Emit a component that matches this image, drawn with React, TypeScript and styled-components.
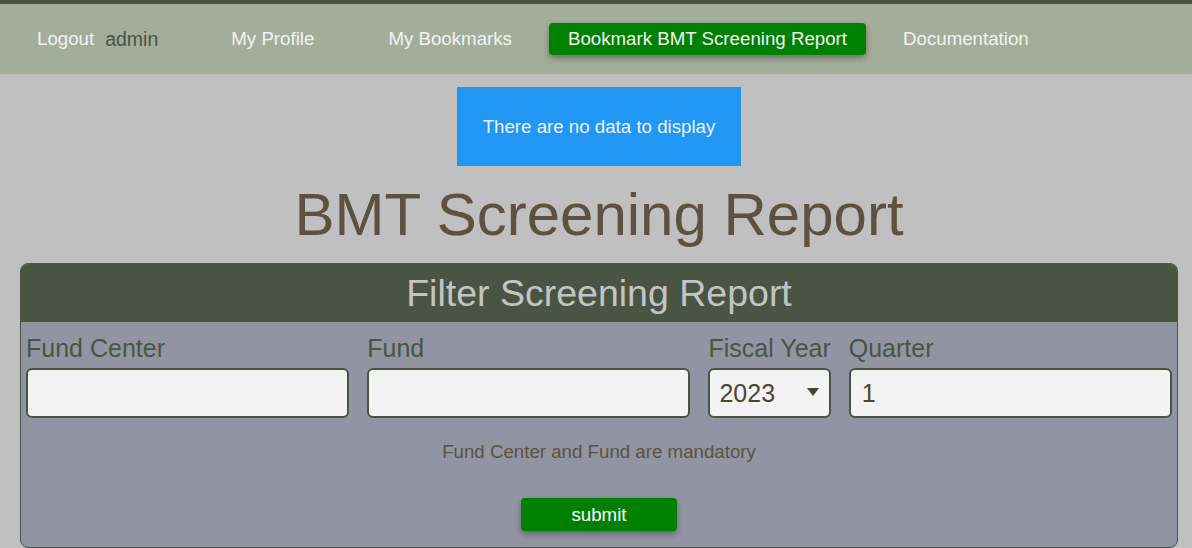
import React from "react";
import styled, { createGlobalStyle } from "styled-components";

const Global = createGlobalStyle`
  html, body { margin: 0; padding: 0; }
  body {
    background: #c0c0c0;
    font-family: "Liberation Sans", Arial, sans-serif;
    overflow: hidden;
  }
`;

const Page = styled.div`
  width: 1198px;
  display: flex;
  flex-direction: column;
  align-items: center;
`;

const Nav = styled.nav`
  align-self: stretch;
  height: 70px;
  border-top: 4px solid #4a5443;
  background: #a3ae9a;
  display: flex;
  align-items: center;
  padding-left: 18px;
`;

const NavItem = styled.a<{ $ml?: number; $active?: boolean }>`
  margin-left: ${(p) => p.$ml ?? 0}px;
  padding: 0 19px;
  height: 32px;
  display: flex;
  align-items: center;
  font-size: 18.7px;
  color: #f2f2f2;
  text-decoration: none;
  white-space: nowrap;
  border-radius: 4px;
  background: ${(p) => (p.$active ? "#008000" : "transparent")};
  box-shadow: ${(p) => (p.$active ? "0 3px 6px rgba(0,0,0,0.35)" : "none")};
`;

const User = styled.span`
  margin-left: 11px;
  color: #4a5443;
  font-size: 19.5px;
`;

const Notice = styled.div`
  margin-top: 13px;
  width: 284px;
  height: 79px;
  box-sizing: border-box;
  background: #2196f3;
  color: #eef2f8;
  font-size: 18.7px;
  display: flex;
  align-items: center;
  justify-content: center;
`;

const Title = styled.h1`
  margin: 14px 0;
  font-size: 60px;
  line-height: 69px;
  font-weight: normal;
  color: #5c5142;
`;

const Panel = styled.section`
  align-self: stretch;
  margin: 0 20px;
  border: 1px solid #4a5443;
  border-radius: 8px;
  overflow: hidden;
  background: #9294a3;
`;

const PanelHeader = styled.h2`
  margin: 0;
  height: 58px;
  line-height: 59px;
  background: #4a5443;
  color: #c4c4c4;
  font-size: 37.5px;
  font-weight: normal;
  text-align: center;
`;

const Body = styled.div`
  padding: 12px 5px 16px;
  display: flex;
  flex-direction: column;
  align-items: center;
`;

const Fields = styled.div`
  align-self: stretch;
  display: flex;
  gap: 18px;
`;

const Field = styled.label<{ $grow?: boolean }>`
  flex: ${(p) => (p.$grow ? "1 1 0" : "0 0 auto")};
  display: flex;
  flex-direction: column;
  gap: 5px;
`;

const Label = styled.span`
  font-size: 25px;
  line-height: 29px;
  color: #4a5443;
  white-space: nowrap;
`;

const Input = styled.input`
  box-sizing: border-box;
  width: 100%;
  height: 50px;
  border: 2px solid #4a5443;
  border-radius: 6px;
  background: #f3f3f3;
  padding: 0 11px;
  font-family: "Liberation Sans", Arial, sans-serif;
  font-size: 25px;
  color: #4f4436;
  outline: none;
`;

const SelectWrap = styled.div`
  position: relative;
  &::after {
    content: "";
    position: absolute;
    right: 12px;
    top: 20px;
    border-left: 6px solid transparent;
    border-right: 6px solid transparent;
    border-top: 8px solid #3f4538;
    pointer-events: none;
  }
`;

const Select = styled.select`
  box-sizing: border-box;
  width: 100%;
  height: 50px;
  border: 2px solid #4a5443;
  border-radius: 6px;
  background: #f3f3f3;
  padding: 0 9px;
  font-family: "Liberation Sans", Arial, sans-serif;
  font-size: 25px;
  color: #4f4436;
  appearance: none;
  -webkit-appearance: none;
  outline: none;
`;

const Hint = styled.p`
  margin: 23px 0 0;
  font-size: 18.7px;
  line-height: 22px;
  color: #5c5142;
`;

const Submit = styled.button`
  margin-top: 35px;
  width: 156px;
  height: 33px;
  border: none;
  border-radius: 4px;
  background: #008000;
  color: #ffffff;
  font-family: "Liberation Sans", Arial, sans-serif;
  font-size: 18.7px;
  box-shadow: 0 3px 6px rgba(0, 0, 0, 0.35);
`;

export default function App() {
  return (
    <Page>
      <Global />
      <Nav>
        <NavItem>
          Logout<User>admin</User>
        </NavItem>
        <NavItem $ml={35}>My Profile</NavItem>
        <NavItem $ml={36}>My Bookmarks</NavItem>
        <NavItem $ml={18} $active>
          Bookmark BMT Screening Report
        </NavItem>
        <NavItem $ml={18}>Documentation</NavItem>
      </Nav>
      <Notice>There are no data to display</Notice>
      <Title>BMT Screening Report</Title>
      <Panel>
        <PanelHeader>Filter Screening Report</PanelHeader>
        <Body>
          <Fields>
            <Field $grow>
              <Label>Fund Center</Label>
              <Input type="text" />
            </Field>
            <Field $grow>
              <Label>Fund</Label>
              <Input type="text" />
            </Field>
            <Field>
              <Label>Fiscal Year</Label>
              <SelectWrap>
                <Select defaultValue="2023">
                  <option value="2023">2023</option>
                </Select>
              </SelectWrap>
            </Field>
            <Field $grow>
              <Label>Quarter</Label>
              <Input type="text" defaultValue="1" />
            </Field>
          </Fields>
          <Hint>Fund Center and Fund are mandatory</Hint>
          <Submit>submit</Submit>
        </Body>
      </Panel>
    </Page>
  );
}
